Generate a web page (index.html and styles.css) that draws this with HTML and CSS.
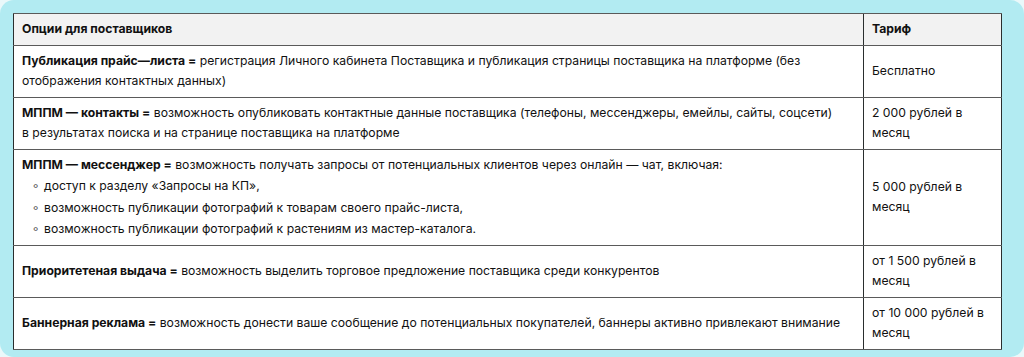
FILE: index.html
```html
<!DOCTYPE html>
<html lang="ru">
<head>
<meta charset="utf-8">
<link rel="stylesheet" href="styles.css">
</head>
<body>
<div class="panel">
  <table class="tariffs">
    <thead>
      <tr><th class="opt">Опции для поставщиков</th><th class="price">Тариф</th></tr>
    </thead>
    <tbody>
      <tr>
        <td><b>Публикация прайс—листа =</b> регистрация Личного кабинета Поставщика и публикация страницы поставщика на платформе (без отображения контактных данных)</td>
        <td>Бесплатно</td>
      </tr>
      <tr>
        <td><b>МППМ — контакты =</b> возможность опубликовать контактные данные поставщика (телефоны, мессенджеры, емейлы, сайты, соцсети) в&nbsp;результатах поиска и на странице поставщика на платформе</td>
        <td>2 000 рублей в месяц</td>
      </tr>
      <tr>
        <td><b>МППМ — мессенджер =</b> возможность получать запросы от потенциальных клиентов через онлайн — чат, включая:
          <ul>
            <li>доступ к разделу «Запросы на КП»,</li>
            <li>возможность публикации фотографий к товарам своего прайс-листа,</li>
            <li>возможность публикации фотографий к растениям из мастер-каталога.</li>
          </ul>
        </td>
        <td>5 000 рублей в месяц</td>
      </tr>
      <tr>
        <td><b>Приоритетеная выдача =</b> возможность выделить торговое предложение поставщика среди конкурентов</td>
        <td>от 1 500 рублей в месяц</td>
      </tr>
      <tr>
        <td><b>Баннерная реклама =</b> возможность донести ваше сообщение до потенциальных покупателей, баннеры активно привлекают внимание</td>
        <td>от 10 000 рублей в месяц</td>
      </tr>
    </tbody>
  </table>
</div>
</body>
</html>
```
FILE: styles.css
```css
html, body {
  margin: 0;
  padding: 0;
  background: #eaf8fa;
}
body {
  font-family: Inter, "Noto Sans", sans-serif;
  font-size: 12.2px;
  line-height: 20.5px;
  color: #111;
}
.panel {
  width: 1024px;
  height: 357px;
  box-sizing: border-box;
  background: #b2ebf2;
  border-radius: 14px;
  padding: 13px 22px 12px 13px;
}
.tariffs {
  width: 989px;
  border-collapse: collapse;
  background: #fff;
  border: 1px solid #2a2e2e;
}
.tariffs th, .tariffs td {
  text-align: left;
  vertical-align: middle;
  padding: 5px 8px 5px 8px;
  border-top: 1px solid #5a5a5a;
  border-bottom: 1px solid #5a5a5a;
}
.tariffs th {
  background: #f2f2f2;
  font-weight: 700;
}
.tariffs th.price, .tariffs td:last-child {
  border-left: 1px solid #2a2e2e;
  width: 121px;
}
.tariffs b {
  font-weight: 700;
}
.tariffs ul {
  list-style: none;
  margin: 0;
  padding: 0 0 0 10px;
}
.tariffs li::before {
  content: "◦";
  display: inline-block;
  width: 12px;
  font-size: 13px;
  color: #555;
}
```
